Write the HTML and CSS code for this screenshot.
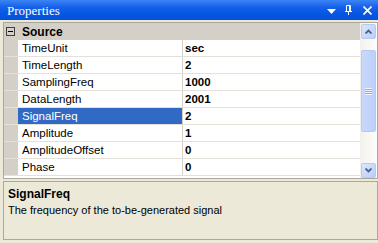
FILE: index.html
```html
<!DOCTYPE html>
<html>
<head>
<meta charset="utf-8">
<link rel="stylesheet" href="styles.css">
</head>
<body>
<div class="window">
  <div class="titlebar">
    <span class="title">Properties</span>
    <div class="tb-icons">
      <svg class="ic-drop" width="9" height="5" viewBox="0 0 9 5"><path d="M0 0H9L4.5 5Z" fill="#fff"/></svg>
      <svg class="ic-pin" width="7" height="10" viewBox="0 0 7 10"><path d="M1.5 0.5H5.5V6.5H1.5Z M4.5 0.5V6.5 M0 6.5H7 M3.5 6.5V10" fill="none" stroke="#fff" stroke-width="1"/></svg>
      <svg class="ic-close" width="9" height="9" viewBox="0 0 9 9"><path d="M0.5 0.5L8.5 8.5M8.5 0.5L0.5 8.5" stroke="#fff" stroke-width="1.6"/></svg>
    </div>
  </div>
  <div class="grid">
    <div class="rows">
      <div class="cat">
        <span class="minus"></span>
        <span class="cat-name">Source</span>
      </div>
      <div class="row"><span class="gut"></span><span class="name">TimeUnit</span><span class="val">sec</span></div>
      <div class="row"><span class="gut"></span><span class="name">TimeLength</span><span class="val">2</span></div>
      <div class="row"><span class="gut"></span><span class="name">SamplingFreq</span><span class="val">1000</span></div>
      <div class="row"><span class="gut"></span><span class="name">DataLength</span><span class="val">2001</span></div>
      <div class="row sel"><span class="gut"></span><span class="name">SignalFreq</span><span class="val">2</span></div>
      <div class="row"><span class="gut"></span><span class="name">Amplitude</span><span class="val">1</span></div>
      <div class="row"><span class="gut"></span><span class="name">AmplitudeOffset</span><span class="val">0</span></div>
      <div class="row"><span class="gut"></span><span class="name">Phase</span><span class="val">0</span></div>
    </div>
    <div class="scroll">
      <div class="sbtn"><svg width="7" height="5" viewBox="0 0 7 5"><path d="M0.5 4.5L3.5 1.5L6.5 4.5" fill="none" stroke="#4d6185" stroke-width="1.8"/></svg></div>
      <div class="track">
        <div class="thumb"><span class="grip"></span></div>
      </div>
      <div class="sbtn"><svg width="7" height="5" viewBox="0 0 7 5"><path d="M0.5 0.5L3.5 3.5L6.5 0.5" fill="none" stroke="#4d6185" stroke-width="1.8"/></svg></div>
    </div>
  </div>
  <div class="desc">
    <div class="desc-title">SignalFreq</div>
    <div class="desc-text">The frequency of the to-be-generated signal</div>
  </div>
</div>
</body>
</html>
```
FILE: styles.css
```css
html, body {
  margin: 0;
  padding: 0;
  background: #ece9d8;
}
.window {
  width: 378px;
  height: 243px;
  background: #ece9d8;
  font-family: "Liberation Sans", Arial, sans-serif;
  font-size: 11.5px;
  color: #000;
  overflow: hidden;
}
.titlebar {
  height: 20px;
  display: flex;
  align-items: center;
  justify-content: space-between;
  background: linear-gradient(to bottom, #3b85f5 0%, #1661ea 35%, #0456e2 70%, #0452d8 100%);
  color: #fff;
}
.title {
  font-family: "Liberation Serif", serif;
  font-size: 13px;
  padding-left: 7px;
  padding-top: 1px;
}
.tb-icons {
  display: flex;
  align-items: center;
  padding-right: 6px;
}
.ic-drop { margin-right: 9px; margin-top: 3px; }
.ic-pin { margin-right: 11px; }
.grid {
  margin: 2px 0 0 3px;
  width: 373px;
  height: 155px;
  border: 1px solid #aca899;
  display: flex;
  background: #fff;
}
.rows {
  flex: 1;
  display: flex;
  flex-direction: column;
}
.cat {
  height: 17px;
  background: #d4d0c8;
  display: flex;
  align-items: center;
}
.minus {
  width: 7px;
  height: 7px;
  border: 1px solid #404040;
  margin-left: 2px;
  margin-right: 7px;
  position: relative;
}
.minus::after {
  content: "";
  position: absolute;
  left: 1px;
  top: 3px;
  width: 5px;
  height: 1px;
  background: #000;
}
.cat-name {
  font-weight: bold;
  font-size: 12px;
}
.row {
  height: 16px;
  display: flex;
  border-bottom: 1px solid #e3e1da;
  background: #fff;
}
.gut {
  width: 14px;
  background: #d4d0c8;
  flex: none;
}
.name {
  width: 160px;
  padding-left: 4px;
  border-right: 1px solid #d4d0c8;
  display: flex;
  align-items: center;
  flex: none;
}
.val {
  padding-left: 2px;
  display: flex;
  align-items: center;
  font-weight: bold;
}
.sel .name {
  background: #316ac5;
  color: #fff;
}
.scroll {
  width: 17px;
  display: flex;
  flex-direction: column;
  background: linear-gradient(to right, #f3f1ec, #fdfdfb);
  padding-top: 1px;
  box-sizing: border-box;
}
.sbtn {
  width: 15px;
  height: 15px;
  margin-left: 1px;
  box-sizing: border-box;
  border: 1px solid #b6c8f4;
  border-radius: 2px;
  background: linear-gradient(to bottom right, #dde7fe, #b8cdfa);
  display: flex;
  align-items: center;
  justify-content: center;
}
.track {
  flex: 1;
  padding-top: 11px;
  padding-bottom: 31px;
  display: flex;
}
.thumb {
  flex: 1;
  margin-left: 1px;
  margin-right: 1px;
  border: 1px solid #b6c8f4;
  border-radius: 2px;
  background: linear-gradient(to right, #c9d8fc, #bcd0fb);
  display: flex;
  align-items: center;
  justify-content: center;
}
.grip {
  width: 7px;
  height: 7px;
  background: repeating-linear-gradient(to bottom, #eef3fe 0 1px, #8faae6 1px 2px);
}
.desc {
  margin: 2px 0 0 3px;
  width: 375px;
  height: 59px;
  border: 1px solid #aca899;
  padding: 4px 4px;
  box-sizing: border-box;
}
.desc-title {
  font-weight: bold;
  font-size: 12px;
  line-height: 16px;
}
.desc-text {
  font-size: 11px;
  line-height: 16px;
}
```
